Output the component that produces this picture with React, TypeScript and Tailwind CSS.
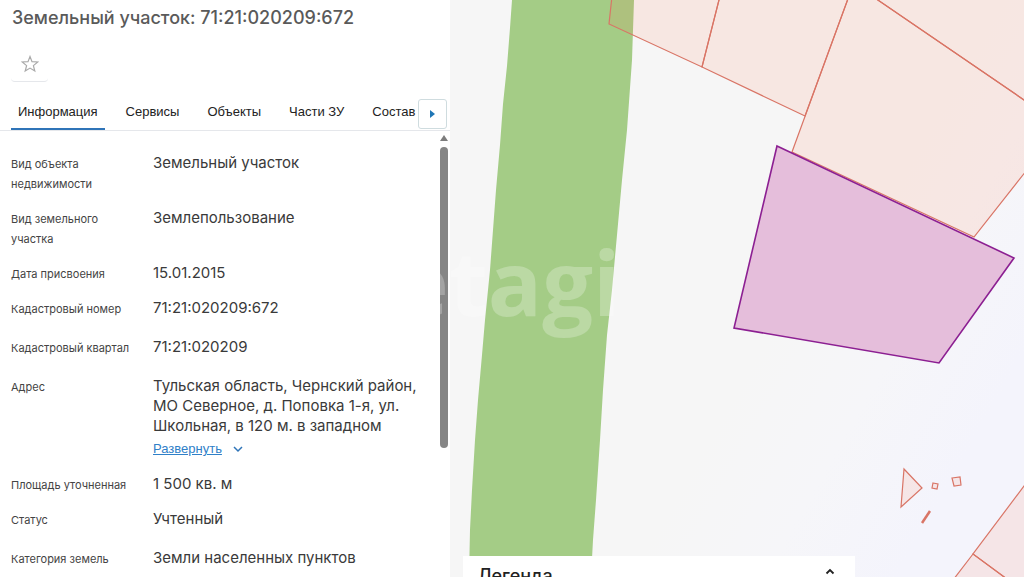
import { useState } from 'react'

interface InfoRow {
  label: string
  value: string
  // wide rows keep a bit more room under them
  wide?: boolean
  expandable?: boolean
}

const tabs = ['Информация', 'Сервисы', 'Объекты', 'Части ЗУ', 'Состав']

const rows: InfoRow[] = [
  { label: 'Вид объекта недвижимости', value: 'Земельный участок' },
  { label: 'Вид земельного участка', value: 'Землепользование' },
  { label: 'Дата присвоения', value: '15.01.2015' },
  { label: 'Кадастровый номер', value: '71:21:020209:672', wide: true },
  { label: 'Кадастровый квартал', value: '71:21:020209', wide: true },
  {
    label: 'Адрес',
    value: 'Тульская область, Чернский район, МО Северное, д. Поповка 1-я, ул. Школьная, в 120 м. в западном',
    expandable: true
  },
  { label: 'Площадь уточненная', value: '1 500 кв. м' },
  { label: 'Статус', value: 'Учтенный', wide: true },
  { label: 'Категория земель', value: 'Земли населенных пунктов' }
]

const Tabs = () => {
  const [active, setActive] = useState(tabs[0])

  return (
    <nav className="flex h-8 shrink-0 border-b border-gray-200 pl-[11px] font-['Liberation_Sans',sans-serif]">
      <div className="flex min-w-0 flex-1 gap-[14px] overflow-hidden">
        {tabs.map((tab) => (
          <button
            key={tab}
            type="button"
            onClick={() => setActive(tab)}
            className={
              tab === active
                ? 'shrink-0 border-b-2 border-[#2f74b8] px-[7px] pb-[3px] text-[13px] text-[#222]'
                : 'shrink-0 border-b-2 border-transparent px-[7px] pb-[3px] text-[13px] text-[#222]'
            }
          >
            {tab}
          </button>
        ))}
      </div>
      <button
        type="button"
        aria-label="Следующие вкладки"
        className="mr-[3px] flex h-[30px] w-[29px] shrink-0 items-center justify-center rounded-[3px] border border-[#cfdcdf] bg-white"
      >
        <svg width="5" height="8" viewBox="0 0 5 8">
          <path d="M0 0L5 4L0 8Z" fill="#1f76b5" />
        </svg>
      </button>
    </nav>
  )
}

const Info = () => (
  <dl className="min-w-0 flex-1 overflow-hidden pt-[22px] pl-[11px]">
    {rows.map((row) => (
      <div key={row.label} className={row.wide ? 'flex pb-[19px]' : 'flex pb-[15px]'}>
        <dt className="-mb-px w-[142px] shrink-0 pt-px pr-5 text-[11px] leading-5 text-[#444]">{row.label}</dt>
        <dd className="w-[270px] text-[15px] leading-5 text-[#3a3a3a]">
          {row.value}
          {row.expandable && (
            <a
              href="#address"
              className="mt-[3px] flex items-center gap-2 font-['Liberation_Sans',sans-serif] text-[13px] text-[#2f80c8]"
            >
              <span className="underline">Развернуть</span>
              <svg width="16" height="16" viewBox="0 0 16 16" fill="none" stroke="#2f74b8" strokeWidth="1.5">
                <path d="M4 6L8 10L12 6" />
              </svg>
            </a>
          )}
        </dd>
      </div>
    ))}
  </dl>
)

const Scrollbar = () => (
  <div className="flex w-[10px] shrink-0 flex-col items-center pt-1 pr-[2px]">
    <svg width="8" height="6" viewBox="0 0 8 6">
      <path d="M4 0L8 6H0Z" fill="#7d7d7d" />
    </svg>
    <div className="mt-[6px] h-[68%] w-2 rounded-full bg-[#868686]" />
  </div>
)

const Map = () => (
  <svg className="h-full w-full" viewBox="0 0 574 577" preserveAspectRatio="xMinYMin slice">
    <defs>
      <linearGradient id="ground" x1="0.6" y1="0.5" x2="0.95" y2="0.7">
        <stop offset="0" stopColor="#f6f6f6" />
        <stop offset="0.5" stopColor="#f6f6f9" />
        <stop offset="1" stopColor="#f4f4fc" />
      </linearGradient>
    </defs>
    <rect width="574" height="577" fill="url(#ground)" />
    <path
      d="M62 0L60 28L57 66L53 104L50 145L46 190L43 230L40 270L35 320L32 355L28 400L25 440L22 490L20 530L19 577H141L143 540L146 500L150 440L153 390L157 335L162 290L167 235L172 180L177 130L182 60L184 0Z"
      fill="#a4cc86"
    />
    <g fill="#ff6a40" fillOpacity="0.11" stroke="#d97566" strokeWidth="1.2">
      <path d="M162 -4L159 24L252 67L270 -4Z" />
      <path d="M270 -4L252 67L355 116L399 -4Z" />
      <path d="M399 -4L342 152L524 237L580 166V104L422 -4Z" />
      <path d="M422 -4L580 104V-4Z" />
      <path d="M454 469L472 488L451 507Z" />
      <path d="M483 483L488 484L487 489L482 488Z" />
      <path d="M502 478L510 477L511 485L504 486Z" />
      <path d="M480 511L472 523" strokeWidth="2.5" />
      <path d="M580 478L523 554L580 596Z" />
      <path d="M523 554L500 584H580V596Z" />
    </g>
    <path d="M327 146L564 258L489 363L284 328Z" fill="#e5bedb" stroke="#8c1f92" strokeWidth="1.6" />
  </svg>
)

export default function App() {
  return (
    <div className="relative flex h-screen overflow-hidden bg-[#f6f6f6] font-['Inter',sans-serif]">
      <aside className="flex w-[450px] shrink-0 flex-col bg-white">
        <h1 className="px-3 pt-[6px] text-[18px] leading-6 font-medium text-[#5a5a5a]">
          Земельный участок: 71:21:020209:672
        </h1>
        <button
          type="button"
          aria-label="В избранное"
          className="mt-4 mb-[17px] ml-[11px] flex h-9 w-[37px] shrink-0 items-center justify-center rounded-sm border-b border-gray-200 bg-white"
        >
          <svg width="18" height="18" viewBox="0 0 18 18" fill="none" stroke="#aaa" strokeWidth="1.2">
            <path d="M9 1.5L11 6.6L16.8 7L12.4 10.6L13.8 16L9 13.1L4.2 16L5.6 10.6L1.2 7L7 6.6Z" />
          </svg>
        </button>
        <Tabs />
        <div className="flex min-h-0 flex-1">
          <Info />
          <Scrollbar />
        </div>
      </aside>

      <main className="relative min-w-0 flex-1 overflow-hidden">
        <Map />
        <section className="absolute bottom-0 left-[13px] flex h-[21px] w-[392px] items-start justify-between overflow-hidden bg-white pr-5 pl-[15px]">
          <h2 className="pt-2 text-[18px] leading-6 font-medium text-[#222]">Легенда</h2>
          <button type="button" aria-label="Показать легенду" className="pt-3">
            <svg width="10" height="7" viewBox="0 0 10 7" fill="none" stroke="#222" strokeWidth="1.8">
              <path d="M1.5 5.5L5 2L8.5 5.5" />
            </svg>
          </button>
        </section>
      </main>

      {/* watermark over both panels */}
      <div className="pointer-events-none absolute inset-0 flex items-center justify-center pr-2 pb-4">
        <span className="font-['Open_Sans',sans-serif] text-[90px] leading-none font-bold text-white/25">etagi</span>
      </div>
    </div>
  )
}
